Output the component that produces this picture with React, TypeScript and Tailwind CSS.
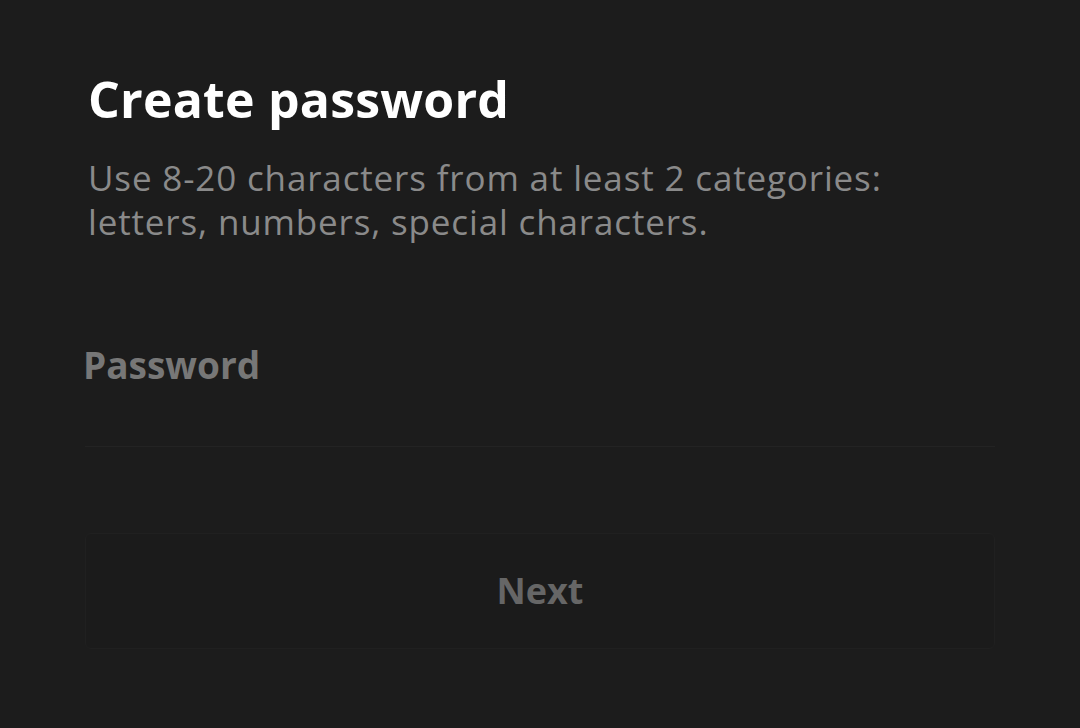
export default function App() {
  return (
    <div className="min-h-[728px] w-full bg-[#1c1c1c] font-['Open_Sans',sans-serif]">
      <div className="flex flex-col px-[85px] pt-[69px]">
        <h1 className="pl-[3px] text-[50px] font-bold leading-[60px] tracking-[0.2px] text-white">
          Create password
        </h1>
        <p className="mt-[27px] pl-[3px] text-[35px] leading-[44px] tracking-[0.85px] text-[#8a8a8a]">
          Use 8-20 characters from at least 2 categories:
          <br />
          letters, numbers, special characters.
        </p>

        <label className="-ml-[2px] mt-[98px] text-[37px] font-bold leading-[46px] text-[#777777]">
          Password
        </label>
        <input
          type="password"
          className="mt-[13px] h-[46px] w-full border-b border-[#232323] bg-transparent outline-none"
        />

        <button className="mt-[86px] flex h-[116px] w-full items-center justify-center rounded-[6px] border border-[#202020] bg-[#1b1b1b] text-[36px] font-bold text-[#666666]">
          Next
        </button>
      </div>
    </div>
  )
}
